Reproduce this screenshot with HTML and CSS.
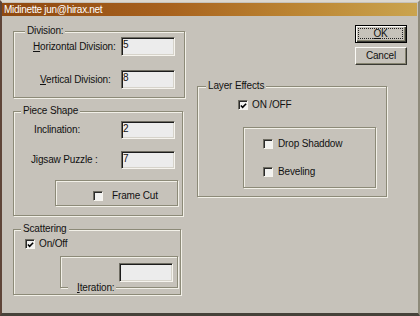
FILE: index.html
```html
<!DOCTYPE html>
<html>
<head>
<meta charset="utf-8">
<title>Midinette</title>
<link rel="stylesheet" href="styles.css">
</head>
<body>
<div class="window">
  <div class="titlebar">Midinette jun@hirax.net</div>
  <div class="client">
    <div class="col-left">
      <div class="group g-division">
        <span class="legend lg-division">Division:</span>
        <div class="row">
          <span class="lbl l-horiz"><u>H</u>orizontal Division:</span>
          <div class="edit">5</div>
        </div>
        <div class="row gap-14">
          <span class="lbl l-vert"><u>V</u>ertical Division:</span>
          <div class="edit">8</div>
        </div>
      </div>

      <div class="group g-piece">
        <span class="legend lg-small">Piece Shape</span>
        <div class="row row-18">
          <span class="lbl l-incl">Inclination:</span>
          <div class="edit edit-18">2</div>
        </div>
        <div class="row row-18 gap-12">
          <span class="lbl l-jig">Jigsaw Puzzle :</span>
          <div class="edit edit-18">7</div>
        </div>
        <div class="subbox frame-box">
          <div class="check-row">
            <span class="checkbox"></span>
            <span class="check-text wide">Frame Cut</span>
          </div>
        </div>
      </div>

      <div class="group g-scatter">
        <span class="legend lg-small">Scattering</span>
        <div class="check-row scatter-check">
          <span class="checkbox checked"><svg viewBox="0 0 8 8" width="8" height="8"><polyline points="1,3.5 3,5.5 7,1.5" fill="none" stroke="#000" stroke-width="1.8"/></svg></span>
          <span class="check-text">On/Off</span>
        </div>
        <div class="subbox iter-box">
          <div class="edit iter-edit"></div>
          <span class="iter-label"><u>I</u>teration:</span>
        </div>
      </div>
    </div>

    <div class="col-right">
      <div class="buttons">
        <div class="btn btn-default"><span class="focus"><u>O</u>K</span></div>
        <div class="btn">Cancel</div>
      </div>
      <div class="group g-layer">
        <span class="legend lg-layer">Layer Effects</span>
        <div class="check-row layer-check">
          <span class="checkbox checked"><svg viewBox="0 0 8 8" width="8" height="8"><polyline points="1,3.5 3,5.5 7,1.5" fill="none" stroke="#000" stroke-width="1.8"/></svg></span>
          <span class="check-text">ON /OFF</span>
        </div>
        <div class="subbox layer-box">
          <div class="check-row">
            <span class="checkbox"></span>
            <span class="check-text">Drop Shaddow</span>
          </div>
          <div class="check-row gap-18">
            <span class="checkbox"></span>
            <span class="check-text">Beveling</span>
          </div>
        </div>
      </div>
    </div>
  </div>
</div>
</body>
</html>
```

FILE: styles.css
```css
* { box-sizing: border-box; }

html, body {
  margin: 0;
  padding: 0;
  width: 420px;
  height: 316px;
  overflow: hidden;
  background: #c6c2ba;
}

.window {
  width: 420px;
  height: 316px;
  background: #c6c2ba;
  border-top: 2px solid #dcd8d0;
  border-left: 2px solid #5e4438;
  border-right: 2px solid #8e8a7a;
  border-bottom: 3px solid #46423a;
  padding-top: 1px;
  font-family: "Liberation Sans", Arial, sans-serif;
  font-size: 10px;
  letter-spacing: -0.15px;
  color: #111;
}

.titlebar {
  height: 13px;
  line-height: 13px;
  padding-left: 2px;
  margin-right: 1px;
  color: #fff;
  letter-spacing: -0.3px;
  background: linear-gradient(to right, #8e4810 0%, #a8621e 40%, #bb8432 70%, #caa44e 100%);
}

.client {
  display: flex;
  align-items: flex-start;
  padding-left: 11px;
}

.col-left {
  width: 172px;
  margin-top: 15px;
  display: flex;
  flex-direction: column;
}

.col-right {
  width: 210px;
  margin-left: 12px;
  margin-top: 9px;
  display: flex;
  flex-direction: column;
}

/* group boxes */
.group, .subbox {
  position: relative;
  border: 1px solid #8c8a78;
  box-shadow: inset 1px 1px 0 #f2f0e8, 1px 1px 0 #f2f0e8;
}

.legend {
  position: absolute;
  top: -7px;
  padding: 0 2px;
  line-height: 12px;
  background: #c6c2ba;
  white-space: nowrap;
}
.lg-division { left: 11px; }
.lg-small { left: 7px; }
.lg-layer { left: 8px; }

.g-division {
  width: 172px;
  padding: 5px 0 8px;
}
.g-piece {
  width: 170px;
  margin-top: 13px;
  padding: 9px 0 9px;
}
.g-scatter {
  width: 168px;
  margin-top: 13px;
  padding: 9px 0 6px;
}
.g-layer {
  width: 190px;
  margin-top: 21px;
  padding: 13px 0 8px;
}

/* label + edit rows */
.row {
  display: flex;
  align-items: center;
  height: 19px;
}
.row-18 { height: 18px; }
.gap-14 { margin-top: 14px; }
.gap-12 { margin-top: 12px; }
.gap-18 { margin-top: 18px; }

.lbl {
  width: 107px;
  white-space: nowrap;
  line-height: 12px;
}
.l-horiz { padding-left: 19px; }
.l-vert { padding-left: 26px; }
.l-incl { padding-left: 20px; }
.l-jig { padding-left: 17px; }

.edit {
  width: 54px;
  height: 19px;
  line-height: 12px;
  background: #ececec;
  border: 1px solid;
  border-color: #6e6c62 #f6f4ee #f6f4ee #6e6c62;
  box-shadow: inset 1px 1px 0 #1c1c1c, inset -1px -1px 0 #d6d3ca;
  padding: 1px 0 0 1px;
  color: #111;
}
.edit-18 { height: 18px; }

/* checkboxes */
.check-row {
  display: flex;
  align-items: center;
  height: 10px;
}
.checkbox {
  width: 10px;
  height: 10px;
  flex: none;
  display: flex;
  align-items: center;
  justify-content: center;
  background: #f2f2f0;
  border: 1px solid;
  border-color: #6e6c62 #f6f4ee #f6f4ee #6e6c62;
  box-shadow: inset 1px 1px 0 #2a2a2a;
}
.checkbox svg { display: block; margin: 1px 0 0 1px; }
.check-text {
  margin-left: 4px;
  line-height: 12px;
  white-space: nowrap;
}
.check-text.wide { margin-left: 9px; }

/* Frame Cut */
.frame-box {
  width: 123px;
  height: 26px;
  margin: 11px 0 0 41px;
  padding-top: 10px;
  padding-left: 37px;
}

/* Scattering */
.scatter-check { padding-left: 11px; }
.iter-box {
  width: 118px;
  height: 32px;
  margin: 7px 0 0 46px;
  padding: 6px 0 0 58px;
}
.iter-edit { height: 19px; }
.iter-label {
  position: absolute;
  left: 7px;
  bottom: -7px;
  padding: 0 2px 0 9px;
  line-height: 12px;
  background: #c6c2ba;
}

/* Layer effects */
.layer-check { padding-left: 40px; }
.layer-box {
  width: 133px;
  height: 61px;
  margin: 17px 0 0 45px;
  padding: 11px 0 0 19px;
}
.layer-box .check-text { margin-left: 5px; }

/* buttons */
.buttons {
  align-self: flex-end;
  display: flex;
  flex-direction: column;
  gap: 4px;
}
.btn {
  width: 52px;
  height: 18px;
  display: flex;
  align-items: center;
  justify-content: center;
  line-height: 12px;
  background: #c6c2ba;
  border: 1px solid;
  border-color: #fbfaf6 #3a3a34 #3a3a34 #fbfaf6;
  box-shadow: inset -1px -1px 0 #85836f;
}
.btn-default {
  border: 1px solid #000;
  box-shadow: inset 1px 1px 0 #fbfaf6, inset -1px -1px 0 #3a3a34, inset -2px -2px 0 #85836f;
  padding: 2px 3px 3px 2px;
}
.focus {
  display: flex;
  align-items: center;
  justify-content: center;
  width: 100%;
  height: 100%;
  border: 1px dotted #222;
}
```
